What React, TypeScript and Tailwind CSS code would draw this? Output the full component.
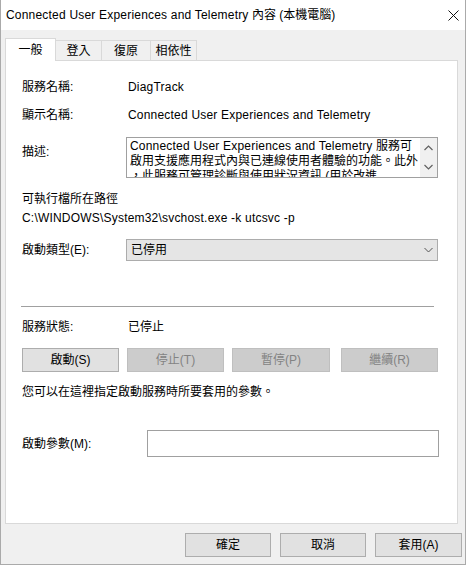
import React from "react";

const font = "font-['Liberation_Sans','Noto_Sans_CJK_TC',sans-serif]";

const tabs = [
  { label: "一般", width: "w-[51px]", active: true },
  { label: "登入", width: "w-[46px]", active: false },
  { label: "復原", width: "w-[49px]", active: false },
  { label: "相依性", width: "w-[46px]", active: false },
];

// Latin runs are set a touch wider than the CJK text around them
const Lat = ({ children }: { children: React.ReactNode }) => (
  <span className="tracking-[0.2px]">{children}</span>
);

const Chevron = ({ dir }: { dir: "up" | "down" }) => (
  <svg width="9" height="6" viewBox="0 0 9 6" className="block">
    <path
      d={dir === "up" ? "M0.5 5 L4.5 1 L8.5 5" : "M0.5 1 L4.5 5 L8.5 1"}
      fill="none"
      stroke="#606060"
      strokeWidth="1.2"
    />
  </svg>
);

const Row = ({ label, children }: { label: string; children: React.ReactNode }) => (
  <div className="flex h-[16px] items-center leading-[16px]">
    <span className="w-[106px] shrink-0">{label}</span>
    <span>{children}</span>
  </div>
);

export default function App() {
  return (
    <div
      className={`${font} flex h-[565px] w-[466px] flex-col border-x border-b border-[#aaaaaa] bg-[#f0f0f0] text-[12px] text-black`}
    >
      {/* title bar */}
      <div className="flex h-[30px] shrink-0 items-center justify-between bg-white pl-[5px] pr-[6px]">
        <span className="leading-[16px]">
          <Lat>Connected User Experiences and Telemetry</Lat> 內容 (本機電腦)
        </span>
        <svg width="11" height="11" viewBox="0 0 11 11">
          <path d="M0.5 0.5 L10.5 10.5 M10.5 0.5 L0.5 10.5" stroke="#111" strokeWidth="1" />
        </svg>
      </div>

      <div className="flex flex-1 flex-col pl-[4px] pr-[3px]">
        {/* tabs */}
        <div className="mt-[8px] flex h-[22px] items-end">
          {tabs.map((t) =>
            t.active ? (
              <div
                key={t.label}
                className={`${t.width} relative z-10 -mb-px flex h-[23px] items-center justify-center border-x border-t border-[#d9d9d9] bg-white pb-[1px]`}
              >
                {t.label}
              </div>
            ) : (
              <div
                key={t.label}
                className={`${t.width} flex h-[20px] items-center justify-center border-r border-t border-[#d9d9d9] bg-[#f0f0f0]`}
              >
                {t.label}
              </div>
            )
          )}
        </div>

        {/* general page */}
        <div className="mr-[4px] flex h-[464px] flex-col border border-[#d9d9d9] bg-white pl-[16px]">
          <div className="mt-[18px]">
            <Row label="服務名稱:">
              <Lat>DiagTrack</Lat>
            </Row>
          </div>
          <div className="mt-[12px]">
            <Row label="顯示名稱:">
              <Lat>Connected User Experiences and Telemetry</Lat>
            </Row>
          </div>

          <div className="mt-[14px] flex">
            <span className="w-[104px] shrink-0 pt-[7px] leading-[16px]">描述:</span>
            <div className="flex h-[41px] w-[312px] overflow-hidden border border-[#a0a0a0]">
              <div className="flex-1 overflow-hidden whitespace-nowrap pl-[3px] pt-[1px] leading-[15px]">
                <div>
                  <Lat>Connected User Experiences and Telemetry</Lat> 服務可
                </div>
                <div>啟用支援應用程式內與已連線使用者體驗的功能。此外</div>
                <div>，此服務可管理診斷與使用狀況資訊 (用於改進</div>
              </div>
              <div className="flex w-[17px] shrink-0 flex-col items-center justify-between bg-[#f0f0f0] pb-[7px] pt-[7px]">
                <Chevron dir="up" />
                <Chevron dir="down" />
              </div>
            </div>
          </div>

          <div className="mt-[13px] leading-[16px]">可執行檔所在路徑</div>
          <div className="mt-[3px] leading-[16px]">
            <Lat>C:\WINDOWS\System32\svchost.exe -k utcsvc -p</Lat>
          </div>

          <div className="mt-[13px] flex items-center">
            <span className="w-[104px] shrink-0 leading-[16px]">啟動類型(E):</span>
            <div className="flex h-[22px] w-[312px] items-center justify-between border border-[#acacac] bg-[#e5e5e5] pl-[4px] pr-[4px]">
              <span>已停用</span>
              <svg width="9" height="6" viewBox="0 0 9 6">
                <path d="M0.5 1 L4.5 5 L8.5 1" fill="none" stroke="#555" strokeWidth="1" />
              </svg>
            </div>
          </div>

          <div className="mt-[45px] h-px w-[413px] -translate-x-px bg-[#a0a0a0]" />

          <div className="mt-[12px]">
            <Row label="服務狀態:">已停止</Row>
          </div>

          <div className="mt-[13px] flex">
            <button className="flex h-[24px] w-[97px] items-center justify-center border border-[#adadad] bg-[#e1e1e1]">
              啟動(S)
            </button>
            <button className="ml-[8px] flex h-[24px] w-[97px] items-center justify-center border border-[#bfbfbf] bg-[#cccccc] text-[#838383]">
              停止(T)
            </button>
            <button className="ml-[8px] flex h-[24px] w-[98px] items-center justify-center border border-[#bfbfbf] bg-[#cccccc] text-[#838383]">
              暫停(P)
            </button>
            <button className="ml-[11px] flex h-[24px] w-[97px] items-center justify-center border border-[#bfbfbf] bg-[#cccccc] text-[#838383]">
              繼續(R)
            </button>
          </div>

          <div className="mt-[12px] leading-[16px]">您可以在這裡指定啟動服務時所要套用的參數。</div>

          <div className="mt-[30px] flex items-center">
            <span className="w-[125px] shrink-0 leading-[16px]">啟動參數(M):</span>
            <div className="h-[27px] w-[292px] border border-[#a0a0a0] bg-white" />
          </div>
        </div>

        {/* dialog buttons */}
        <div className="mt-[9px] flex justify-end gap-[9px]">
          <button className="flex h-[24px] w-[86px] items-center justify-center border border-[#adadad] bg-[#e1e1e1]">
            確定
          </button>
          <button className="flex h-[24px] w-[86px] items-center justify-center border border-[#adadad] bg-[#e1e1e1]">
            取消
          </button>
          <button className="flex h-[24px] w-[87px] items-center justify-center border border-[#adadad] bg-[#e1e1e1]">
            套用(A)
          </button>
        </div>
      </div>
    </div>
  );
}
